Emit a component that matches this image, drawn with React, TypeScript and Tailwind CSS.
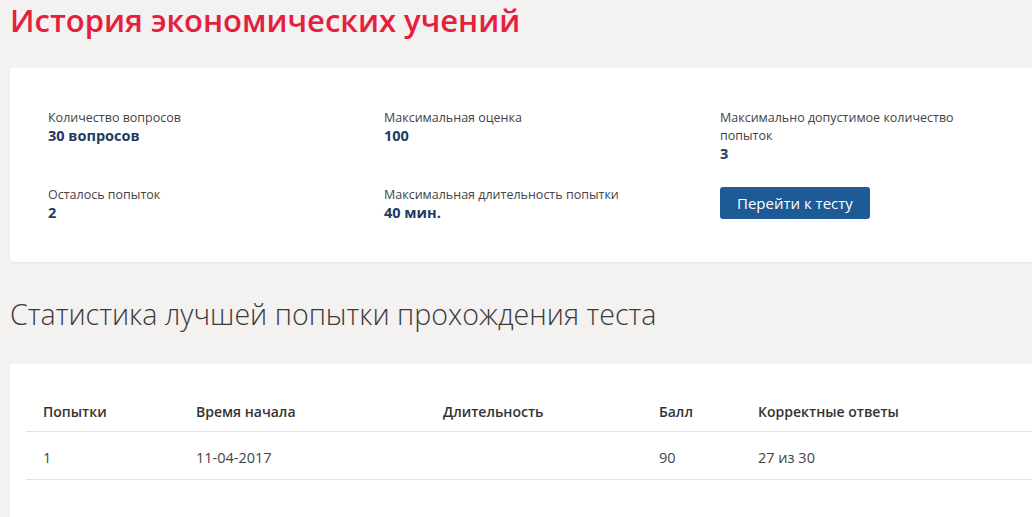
import React from "react";

const font = { fontFamily: '"Open Sans", "Noto Sans", sans-serif' };

function Info({ label, value, narrow }: { label: string; value: string; narrow?: boolean }) {
  return (
    <div className={narrow ? "max-w-[245px]" : ""}>
      <div className="text-[12.5px] leading-[18px] text-[#444]">{label}</div>
      <div className="text-[14.5px] leading-[18px] font-bold text-[#1f3a63]">{value}</div>
    </div>
  );
}

export default function App() {
  const cols = ["w-[153px]", "w-[247px]", "w-[216px]", "w-[99px]", ""];
  const head = ["Попытки", "Время начала", "Длительность", "Балл", "Корректные ответы"];
  const row = ["1", "11-04-2017", "", "90", "27 из 30"];
  return (
    <div className="w-[1032px] h-[517px] overflow-hidden bg-[#f4f1f1]" style={font}>
      <h1 className="pl-[10px] text-[31px] leading-[40px] font-semibold text-[#e4203e]">
        История экономических учений
      </h1>

      <div className="ml-[10px] mt-[28px] w-[1040px] bg-white rounded-[4px] shadow-[0_1px_2px_rgba(0,0,0,0.08)] pl-[38px] pt-[41px] pb-[40px]">
        <div className="grid grid-cols-[336px_336px_336px] gap-y-[23px]">
          <Info label="Количество вопросов" value="30 вопросов" />
          <Info label="Максимальная оценка" value="100" />
          <Info label="Максимально допустимое количество попыток" value="3" narrow />
          <Info label="Осталось попыток" value="2" />
          <Info label="Максимальная длительность попытки" value="40 мин." />
          <div className="pt-[1px]">
            <button className="h-[32px] px-[17px] rounded-[3px] bg-[#1d5a96] text-white text-[15px] leading-[32px]">
              Перейти к тесту
            </button>
          </div>
        </div>
      </div>

      <h2 className="pl-[10px] mt-[34px] text-[28.6px] leading-[36px] font-light text-[#3a3a3a]">
        Статистика лучшей попытки прохождения теста
      </h2>

      <div className="ml-[10px] mt-[32px] w-[1040px] h-[300px] bg-white rounded-[4px] pl-[16px] pt-[29px]">
        <table className="w-[1024px] border-collapse text-[14.5px] text-[#444]">
          <thead>
            <tr className="border-b border-[#e3e3e3]">
              {head.map((h, i) => (
                <th key={i} className={`${cols[i]} text-left text-[14px] font-semibold text-[#333] pl-[17px] pt-[10px] pb-[10px] leading-[18px]`}>
                  {h}
                </th>
              ))}
            </tr>
          </thead>
          <tbody>
            <tr className="border-b border-[#e3e3e3]">
              {row.map((c, i) => (
                <td key={i} className={`${cols[i]} pl-[17px] pt-[17px] pb-[12px] leading-[18px]`}>
                  {c}
                </td>
              ))}
            </tr>
          </tbody>
        </table>
      </div>
    </div>
  );
}
